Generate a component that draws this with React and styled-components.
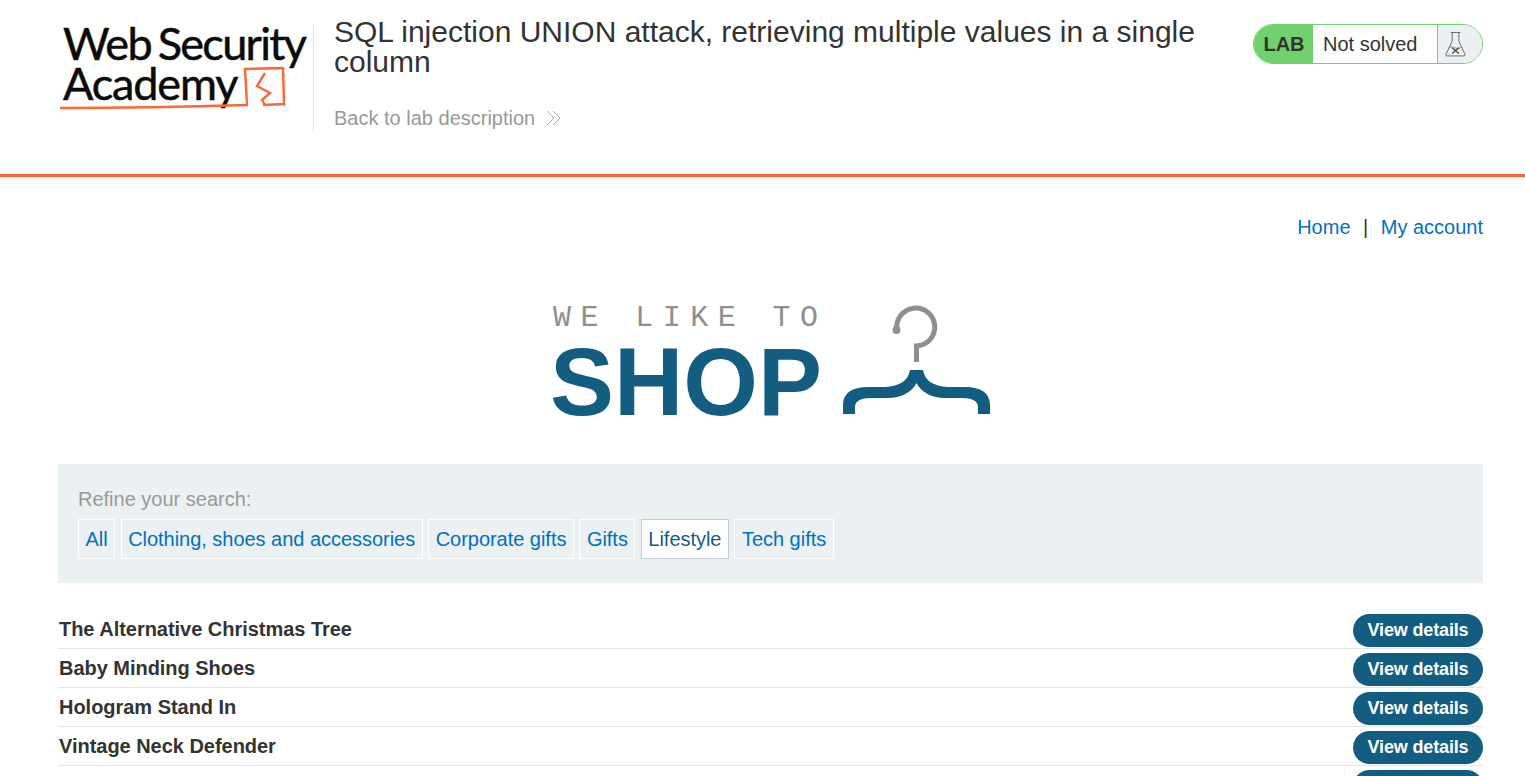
import React from "react";
import styled, { createGlobalStyle } from "styled-components";

const colors = {
  orange: "#ff6633",
  blue: "#0071bc",
  navy: "#135d80",
  grey: "#999999",
  text: "#333332",
  panel: "#ebf0f2",
  green: "#70d16d",
};

const GlobalStyle = createGlobalStyle`
  html, body {
    margin: 0;
    height: 776px;
    overflow: hidden;
    background: #fff;
    font-family: "Liberation Sans", Arial, sans-serif;
    color: ${colors.text};
  }
  * { box-sizing: border-box; }
`;

const Header = styled.header`
  display: flex;
  align-items: flex-start;
  height: 177px;
  padding: 24px 42px 0 58px;
  border-bottom: 3px solid ${colors.orange};
`;

const LogoWrap = styled.div`
  position: relative;
  width: 256px;
  height: 108px;
  flex: none;
  border-right: 1px solid #e6e6e6;
`;

const LogoText = styled.div`
  margin-top: -1px;
  padding: 0 0 0 5px;
  font-family: Lato, "Liberation Sans", sans-serif;
  font-size: 45px;
  line-height: 40px;
  letter-spacing: -1.7px;
  word-spacing: -3px;
  color: #0b0b0b;
  white-space: nowrap;
  -webkit-text-stroke: 0.5px #0b0b0b;
`;

const LogoSecondLine = styled.span`
  letter-spacing: -1.15px;
`;

const LogoMark = styled.svg`
  position: absolute;
  left: 0;
  top: 0;
`;

const LabInfo = styled.div`
  flex: 1;
  padding-left: 20px;
  min-width: 0;
`;

const LabTitle = styled.h2`
  margin: -7px 0 0;
  width: 880px;
  font-size: 30px;
  font-weight: 400;
  line-height: 30px;
  color: ${colors.text};
`;

const BackLink = styled.a`
  display: inline-flex;
  align-items: center;
  gap: 11px;
  margin-top: 29px;
  font-size: 20px;
  line-height: 24px;
  color: ${colors.grey};
`;

const Status = styled.div`
  display: flex;
  flex: none;
  width: 230px;
  height: 40px;
  border: 1px solid ${colors.green};
  border-radius: 20px;
  overflow: hidden;
`;

const StatusLabel = styled.span`
  display: flex;
  align-items: center;
  justify-content: center;
  width: 59px;
  padding-left: 1px;
  background: ${colors.green};
  font-size: 20px;
  font-weight: 700;
`;

const StatusText = styled.span`
  display: flex;
  align-items: center;
  width: 124px;
  padding-left: 10px;
  background: #fff;
  font-size: 20px;
`;

const StatusIcon = styled.span`
  display: flex;
  flex: 1;
  align-items: center;
  padding-left: 7px;
  background: ${colors.panel};
  border-left: 1px solid ${colors.green};
`;

const Main = styled.main`
  padding: 0 42px 0 58px;
`;

const TopNav = styled.nav`
  display: flex;
  justify-content: flex-end;
  gap: 12.5px;
  padding-top: 38px;
  font-size: 20px;
  line-height: 24px;
`;

const NavLink = styled.a`
  color: ${colors.blue};
`;

const ShopLogo = styled.div`
  display: flex;
  justify-content: center;
  align-items: flex-start;
  gap: 20px;
  height: 225px;
  padding: 60px 0 0 0;
  margin-left: 1px;
`;

const ShopWords = styled.div`
  width: 272px;
`;

const Tagline = styled.div`
  margin: 4px 0 0 3px;
  font-family: "Liberation Mono", monospace;
  font-size: 30px;
  line-height: 30px;
  letter-spacing: 9.45px;
  color: #8f8f8f;
  white-space: nowrap;
`;

const Shop = styled.div`
  margin-top: 4px;
  font-size: 96px;
  font-weight: 700;
  line-height: 90px;
  color: ${colors.navy};
`;

const HangerIcon = styled.svg`
  flex: none;
  margin-top: 5px;
`;

const Filters = styled.section`
  height: 119px;
  padding: 23px 20px 0;
  background: ${colors.panel};
`;

const FilterTitle = styled.div`
  font-size: 20px;
  line-height: 24px;
  color: ${colors.grey};
`;

const FilterList = styled.div`
  display: flex;
  gap: 5.5px;
  margin-top: 8px;
`;

const FilterLink = styled.a`
  display: flex;
  align-items: center;
  height: 40px;
  padding: 0 6.5px;
  font-size: 20px;
  letter-spacing: -0.03px;
  border: 1px solid ${(p) => (p.$active ? "#c4ccd0" : "#fff")};
  background: ${(p) => (p.$active ? "#fff" : "transparent")};
  color: ${(p) => (p.$active ? colors.navy : colors.blue)};
`;

const ProductTable = styled.div`
  margin-top: 27px;
`;

const ProductRow = styled.div`
  display: flex;
  align-items: center;
  justify-content: space-between;
  height: 39px;
  padding: 0 0 0 1px;
  border-bottom: 1px solid #e6e6e6;
`;

const ProductName = styled.span`
  font-size: 20px;
  font-weight: 700;
  letter-spacing: -0.03px;
`;

const ViewButton = styled.a`
  display: flex;
  align-items: center;
  justify-content: center;
  align-self: flex-end;
  width: 130px;
  height: 33px;
  margin-bottom: 1px;
  border-radius: 17px;
  background: ${colors.navy};
  color: #fff;
  font-size: 18px;
  font-weight: 700;
  letter-spacing: -0.15px;
`;

const categories = [
  "All",
  "Clothing, shoes and accessories",
  "Corporate gifts",
  "Gifts",
  "Lifestyle",
  "Tech gifts",
];

const products = [
  "The Alternative Christmas Tree",
  "Baby Minding Shoes",
  "Hologram Stand In",
  "Vintage Neck Defender",
  "",
];

const Chevrons = () => (
  <svg width="16" height="16" viewBox="0 0 16 16" fill="none" stroke="#aaa" strokeWidth="1">
    <path d="M1 1l7 7-7 7M7 1l7 7-7 7" />
  </svg>
);

const Flask = () => (
  <svg width="21" height="26" viewBox="0 0 22 27" fill="none" stroke="#444" strokeWidth="0.8">
    <path d="M6 1.5h10M7.5 1.5v9L1 24.5q-.3 1.5 1 1.5h18q1.3 0 1-1.5L14.5 10.5v-9" />
    <path d="M4.5 17c3-1 4-.2 6 .5s4 .5 7-.5" strokeWidth="0.5" />
    <path d="M7.5 17.5l7 6M14.5 17.5l-7 6" strokeWidth="1.3" />
  </svg>
);

const Hanger = () => (
  <HangerIcon width="150" height="112" viewBox="842 304 150 112">
    <path
      d="M897 330A19 19 0 1 1 916.5 346V362"
      fill="none"
      stroke="#8f8f8f"
      strokeWidth="5"
    />
    <circle cx="896.5" cy="330" r="4" fill="#8f8f8f" />
    <path
      fill={colors.navy}
      d="M843 414V405C843 393 852 387 868 387L885 387C900 386 908 381 910 370H923C925 381 933 386 948 387L965 387C981 387 990 393 990 405V414H978V407C978 401 972 398 962 398L945 398C932 398 921 392 916.5 383C912 392 901 398 888 398L871 398C861 398 855 401 855 407V414Z"
    />
  </HangerIcon>
);

export default function App() {
  return (
    <>
      <GlobalStyle />
      <Header>
        <LogoWrap>
          <LogoText>
            Web Security
            <br />
            <LogoSecondLine>Academy</LogoSecondLine>
          </LogoText>
          <LogoMark width="255" height="108" viewBox="58 24 255 108" fill="none" stroke={colors.orange} strokeWidth="2.4">
            <path d="M60 108Q150 108 247 105L245 69L283 68L284 104L263 105" />
            <path d="M265 73L257 86L270 93L262 100L265 105" />
          </LogoMark>
        </LogoWrap>
        <LabInfo>
          <LabTitle>SQL injection UNION attack, retrieving multiple values in a single column</LabTitle>
          <BackLink>
            Back to lab description
            <Chevrons />
          </BackLink>
        </LabInfo>
        <Status>
          <StatusLabel>LAB</StatusLabel>
          <StatusText>Not solved</StatusText>
          <StatusIcon>
            <Flask />
          </StatusIcon>
        </Status>
      </Header>
      <Main>
        <TopNav>
          <NavLink>Home</NavLink>
          <span>|</span>
          <NavLink>My account</NavLink>
        </TopNav>
        <ShopLogo>
          <ShopWords>
            <Tagline>WE LIKE TO</Tagline>
            <Shop>SHOP</Shop>
          </ShopWords>
          <Hanger />
        </ShopLogo>
        <Filters>
          <FilterTitle>Refine your search:</FilterTitle>
          <FilterList>
            {categories.map((c) => (
              <FilterLink key={c} $active={c === "Lifestyle"}>
                {c}
              </FilterLink>
            ))}
          </FilterList>
        </Filters>
        <ProductTable>
          {products.map((p, i) => (
            <ProductRow key={i}>
              <ProductName>{p}</ProductName>
              <ViewButton>View details</ViewButton>
            </ProductRow>
          ))}
        </ProductTable>
      </Main>
    </>
  );
}
